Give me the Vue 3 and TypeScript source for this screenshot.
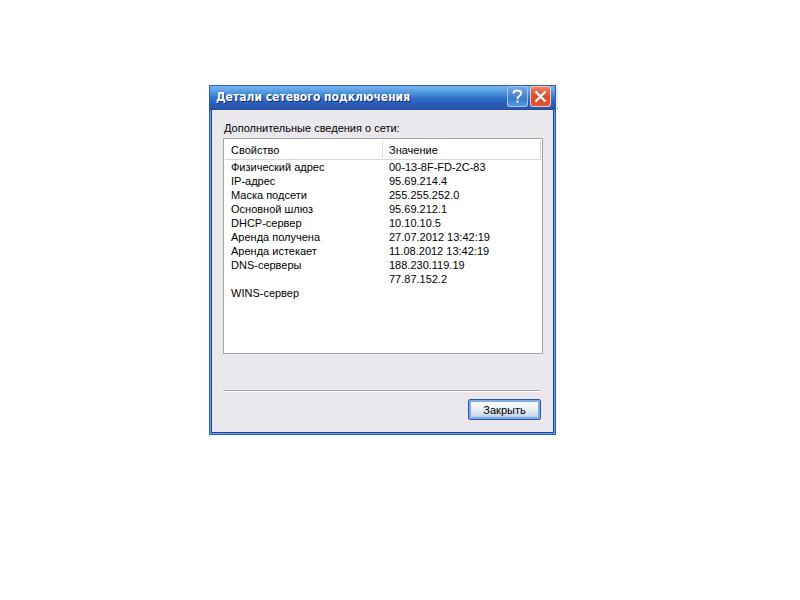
<script setup lang="ts">
import { ref } from 'vue'

interface Detail {
  id: number
  name: string
  value: string
}

const open = ref<boolean>(true)

const details: Detail[] = [
  { id: 1, name: 'Физический адрес', value: '00-13-8F-FD-2C-83' },
  { id: 2, name: 'IP-адрес', value: '95.69.214.4' },
  { id: 3, name: 'Маска подсети', value: '255.255.252.0' },
  { id: 4, name: 'Основной шлюз', value: '95.69.212.1' },
  { id: 5, name: 'DHCP-сервер', value: '10.10.10.5' },
  { id: 6, name: 'Аренда получена', value: '27.07.2012 13:42:19' },
  { id: 7, name: 'Аренда истекает', value: '11.08.2012 13:42:19' },
  { id: 8, name: 'DNS-серверы', value: '188.230.119.19' },
  { id: 9, name: '', value: '77.87.152.2' },
  { id: 10, name: 'WINS-сервер', value: '' },
]

function close(): void {
  open.value = false
}
</script>

<template>
  <main class="desktop">
    <section v-if="open" class="dialog" role="dialog" aria-labelledby="dialog-title">
      <header class="titlebar">
        <h1 id="dialog-title" class="title">Детали сетевого подключения</h1>
        <button class="tool help" type="button" aria-label="Справка">
          <svg viewBox="0 0 21 21" width="21" height="21" aria-hidden="true">
            <path d="M6.500 7.500Q6.500 4.500 10.300 4.500Q14.200 4.500 14.200 7.300Q14.200 8.800 12.200 10Q10.500 11 10.500 13" fill="none" stroke="#fff" stroke-width="2" />
            <path d="M9.500 14.500h2v2h-2z" fill="#fff" />
          </svg>
        </button>
        <button class="tool exit" type="button" aria-label="Закрыть окно" @click="close">
          <svg viewBox="0 0 21 21" width="21" height="21" aria-hidden="true">
            <path d="M5.500 5.500L15.500 15.500M15.500 5.500L5.500 15.500" fill="none" stroke="#fff" stroke-width="2.200" />
          </svg>
        </button>
      </header>
      <div class="body">
        <p id="list-label" class="label">Дополнительные сведения о сети:</p>
        <div class="list">
          <table class="details" aria-labelledby="list-label">
            <thead>
              <tr>
                <th class="name" scope="col">Свойство</th>
                <th scope="col">Значение</th>
              </tr>
            </thead>
            <tbody>
              <tr v-for="row in details" :key="row.id">
                <td>{{ row.name }}</td>
                <td>{{ row.value }}</td>
              </tr>
            </tbody>
          </table>
        </div>
        <footer class="actions">
          <button class="close" type="button" @click="close">Закрыть</button>
        </footer>
      </div>
    </section>
  </main>
</template>

<style>
body {
  margin: 0;
  background: #fff;
}
</style>

<style scoped>
.desktop {
  padding: 85px 0 0 209px;
  font-family: "Liberation Sans", Arial, sans-serif;
  font-size: 11px;
  line-height: 14px;
  color: #000;
}

.dialog {
  position: relative;
  box-sizing: border-box;
  width: 100%;
  max-width: 347px;
  padding: 0 3px 3px;
  background: #ebe8ed;
  border-radius: 2px 2px 0 0;
  box-shadow:
    inset 1px 0 #2560c4,
    inset -1px -1px #2560c4,
    inset 2px 0 #6ba2e8,
    inset -2px -2px #6ba2e8,
    inset 3px 0 #1d449b,
    inset -3px -3px #1d449b;
}

/* Slivers of the window behind the dialog */
.dialog::before {
  content: "";
  position: absolute;
  top: 100%;
  left: 0;
  box-sizing: border-box;
  width: 7px;
  height: 3px;
  background: #ece9f0;
  border-right: 1px solid #8d95b5;
}

.dialog::after {
  content: "";
  position: absolute;
  top: 0;
  left: 100%;
  box-sizing: border-box;
  width: 2px;
  height: 24px;
  background: #ece9f0;
  border-bottom: 1px solid #a9b4d6;
}

.titlebar {
  display: flex;
  align-items: center;
  gap: 2px;
  box-sizing: border-box;
  height: 25px;
  margin: 0 -3px;
  padding: 0 5px 2px 7px;
  background: linear-gradient(#2a62bb 0, #2a62bb 1px, #74b4ee 1px, #62a4e6 5px, #3f86d8 10px, #2f6dc8 14px, #2858b4 20px, #2a56ae 24px, #1e4296 25px);
  border-radius: 2px 2px 0 0;
  box-shadow: inset 1px 0 #2560c4, inset -1px 0 #2560c4;
}

.title {
  flex: 1;
  margin: 0;
  padding-top: 1px;
  font-family: "DejaVu Sans Condensed", "Open Sans", sans-serif;
  font-size: 12px;
  font-weight: 700;
  line-height: 16px;
  white-space: nowrap;
  color: #fff;
  text-shadow: 1px 1px #12296b;
}

.tool {
  box-sizing: border-box;
  width: 21px;
  height: 21px;
  padding: 0;
  border: 0;
  border-radius: 3px;
}

.tool svg {
  display: block;
}

.help {
  background: linear-gradient(#79aee6, #3e79c8 60%, #5b9be0);
  box-shadow: inset 0 0 0 1px #9cc6f0;
}

.exit {
  background: linear-gradient(#ea8a72, #d84c2c 50%, #e0593a);
  box-shadow: inset 0 0 0 1px #f3c4bc;
}

.body {
  padding: 11px 10px 12px 11px;
}

.label {
  margin: 0 0 3px 1px;
}

.list {
  box-sizing: border-box;
  height: 216px;
  padding: 1px;
  background: #fff;
  border: 1px solid #a5a4aa;
}

.details {
  width: 100%;
  table-layout: fixed;
  border-collapse: separate;
  border-spacing: 0;
}

.details th {
  height: 20px;
  box-sizing: border-box;
  padding: 1px 6px 0;
  font-weight: 400;
  text-align: left;
  background: linear-gradient(#d8d7dc, #d8d7dc) right 1px / 1px 17px no-repeat;
  border-bottom: 1px solid #d8d7dc;
}

.details .name {
  width: 158px;
}

.details td {
  height: 14px;
  padding: 0 6px;
  white-space: nowrap;
}

.actions {
  display: flex;
  justify-content: flex-end;
  margin: 36px 3px 0 0;
  padding-top: 8px;
  border-top: 1px solid #a5a4aa;
  box-shadow: inset 0 1px #fff;
}

.close {
  box-sizing: border-box;
  width: 73px;
  height: 21px;
  margin-right: -1px;
  padding: 0;
  font: inherit;
  color: #000;
  background: linear-gradient(#fff, #f0f4fa 40%, #d3dfed 75%, #aebfd6);
  border: 1px solid #2754a8;
  border-radius: 2px;
  box-shadow: inset 0 0 0 2px #82aee6;
}
</style>
